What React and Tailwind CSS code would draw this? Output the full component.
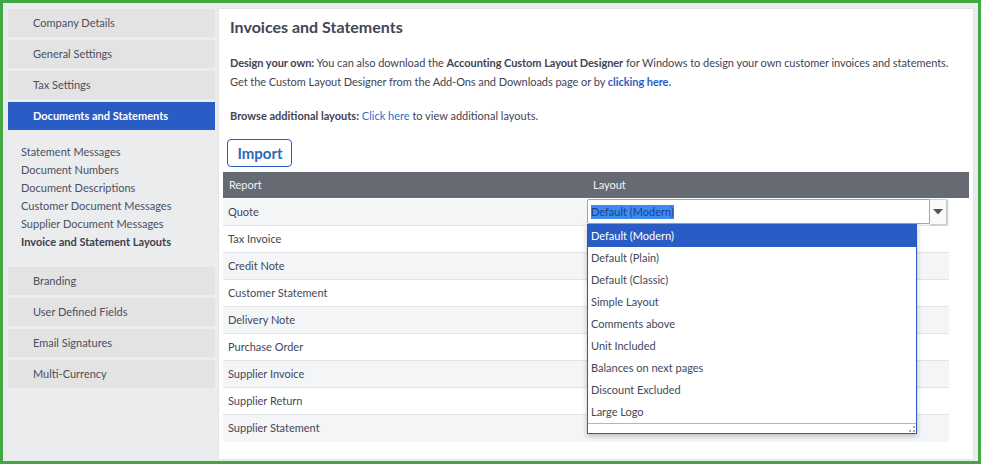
const topItems = ["Company Details", "General Settings", "Tax Settings", "Documents and Statements"];
const subItems = [
  "Statement Messages",
  "Document Numbers",
  "Document Descriptions",
  "Customer Document Messages",
  "Supplier Document Messages",
  "Invoice and Statement Layouts",
];
const bottomItems = ["Branding", "User Defined Fields", "Email Signatures", "Multi-Currency"];
const reports = [
  "Quote",
  "Tax Invoice",
  "Credit Note",
  "Customer Statement",
  "Delivery Note",
  "Purchase Order",
  "Supplier Invoice",
  "Supplier Return",
  "Supplier Statement",
];
const layouts = [
  "Default (Modern)",
  "Default (Plain)",
  "Default (Classic)",
  "Simple Layout",
  "Comments above",
  "Unit Included",
  "Balances on next pages",
  "Discount Excluded",
  "Large Logo",
];

function NavItem({ label, active }) {
  return (
    <div
      className={
        active
          ? "h-[28px] pl-[25px] flex items-center bg-[#2a5cc5] text-white font-bold"
          : "h-[28px] pl-[25px] flex items-center bg-[#e3e3e4] text-[#4a4f5e]"
      }
    >
      {label}
    </div>
  );
}

export default function App() {
  return (
    <div className="w-[981px] h-[464px] overflow-hidden border-[3px] border-[#41a845] bg-[#ebecee] flex text-[11px] text-[#3f4454] font-['Lato',sans-serif]">
      <aside className="w-[215px] shrink-0 pt-[6px] pl-[5px] pr-[3px]">
        <div className="flex flex-col gap-[3px]">
          {topItems.map((t, i) => (
            <NavItem key={t} label={t} active={i === 3} />
          ))}
        </div>
        <div className="mt-[13px] mb-[16px] pl-[13px] flex flex-col">
          {subItems.map((t, i) => (
            <div key={t} className={i === 5 ? "h-[18px] leading-[18px] font-bold text-[#3a3f4d]" : "h-[18px] leading-[18px] text-[#4a5063]"}>
              {t}
            </div>
          ))}
        </div>
        <div className="flex flex-col gap-[3px]">
          {bottomItems.map((t) => (
            <NavItem key={t} label={t} />
          ))}
        </div>
      </aside>

      <main className="relative w-[756px] h-[452px] mt-[5px] bg-white border border-[#e2e4e7] pl-[4px] pr-[4px]">
        <h1 className="mt-[8px] ml-[7px] text-[16px] leading-[20px] font-bold text-[#414654]">Invoices and Statements</h1>
        <div className="mt-[16px] ml-[7px] leading-[19px] text-[#3f4454]">
          <p className="whitespace-nowrap tracking-[-0.055px]">
            <b>Design your own:</b> You can also download the <b>Accounting Custom Layout Designer</b> for Windows to design your own customer invoices and statements.
          </p>
          <p className="whitespace-nowrap tracking-[-0.055px]">
            Get the Custom Layout Designer from the Add-Ons and Downloads page or by <b className="text-[#2a5cc5]">clicking here.</b>
          </p>
          <p className="mt-[15px] whitespace-nowrap">
            <b>Browse additional layouts:</b> <span className="text-[#2a6fc9]">Click here</span> to view additional layouts.
          </p>
        </div>
        <button className="mt-[14px] ml-[4px] w-[65px] h-[28px] pl-[1px] rounded-[4px] border border-[#2a5cc5] bg-white text-[15px] font-bold text-[#2a6ab5] flex items-center justify-center">
          Import
        </button>
        <div className="mt-[5px] h-[26px] bg-[#666a73] text-[#f2f3f5] flex items-center">
          <div className="w-[369px] pl-[6px]">Report</div>
          <div className="pl-[1px]">Layout</div>
        </div>
        <div className="w-[726px] pt-[1px]">
          {reports.map((r, i) => (
            <div
              key={r}
              className={
                i % 2 === 0
                  ? "h-[27px] pl-[5px] flex items-center bg-[#f4f5f7] border-b border-[#e2e4e7] last:border-b-0 text-[#43485a]"
                  : "h-[27px] pl-[5px] flex items-center bg-white border-b border-[#e2e4e7] text-[#43485a]"
              }
            >
              {r}
            </div>
          ))}
        </div>

        {/* open combo box sits over the table */}
        <div className="absolute left-[368px] top-[190px] w-[361px] h-[27px] flex">
          <div className="flex-1 h-[25px] pl-[3px] bg-white border border-[#8ea6dc] rounded-l-[2px] flex items-center">
            <span className="bg-[#3b8cf0] text-[#1f3f8a] leading-[14px] inline-block">Default (Modern)</span>
          </div>
          <div className="w-[18px] h-full bg-[#fafafa] border-r-2 border-b-2 border-t border-[#cdcfd6] rounded-r-[3px] flex items-center justify-center">
            <svg width="10" height="6" viewBox="0 0 10 6">
              <path d="M0 0h10L5 5.5z" fill="#555" />
            </svg>
          </div>
        </div>
        <div className="absolute left-[368px] top-[215px] w-[330px] h-[210px] bg-white border border-[#2a5cc5] shadow-[0_2px_5px_rgba(0,0,0,0.25)] flex flex-col">
          {layouts.map((l, i) => (
            <div
              key={l}
              className={
                i === 0
                  ? "h-[22px] shrink-0 pl-[3px] flex items-center bg-[#2a5cc5] text-white"
                  : "h-[22px] shrink-0 pl-[3px] flex items-center text-[#43485a]"
              }
            >
              {l}
            </div>
          ))}
          <div className="relative flex-1 border-t border-[#b5b5b5]">
            <svg className="absolute right-[1px] bottom-[1px]" width="6" height="6" viewBox="0 0 6 6">
              <path d="M4 0h2v2H4zM0 4h2v2H0zM4 4h2v2H4z" fill="#a9a9a9" />
            </svg>
          </div>
        </div>
      </main>
    </div>
  );
}
